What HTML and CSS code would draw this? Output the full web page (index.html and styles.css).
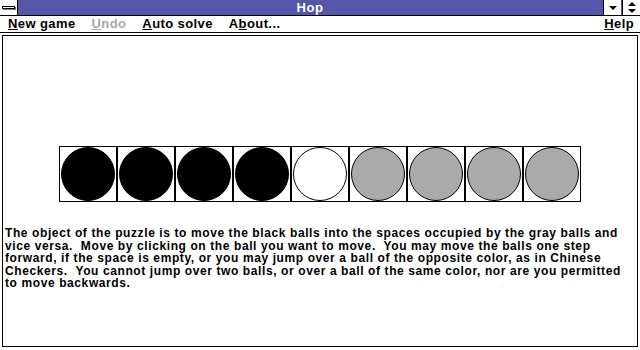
FILE: index.html
```html
<!DOCTYPE html>
<html lang="en">
<head>
    <meta charset="UTF-8">
    <title>Hop</title>
    <link rel="stylesheet" href="styles.css">
</head>
<body>

    <div class="titlebar">
        <div class="sysmenu"><span class="sysbar"></span></div>
        <div class="title">Hop</div>
        <div class="winbtn">
            <svg width="10" height="10" viewBox="0 0 10 10"><polygon points="1,3 9,3 5,7" fill="#000"/></svg>
        </div>
        <div class="winbtn">
            <svg width="10" height="12" viewBox="0 0 10 12"><polygon points="5,0 9,4 1,4" fill="#000"/><polygon points="1,7 9,7 5,11" fill="#000"/></svg>
        </div>
    </div>

    <ul class="menubar">
        <li><u>N</u>ew game</li>
        <li class="disabled"><u>U</u>ndo</li>
        <li><u>A</u>uto solve</li>
        <li>A<u>b</u>out...</li>
        <li class="help"><u>H</u>elp</li>
    </ul>

    <div class="client">
        <div class="board">
            <div class="cell"><div class="ball black"></div></div>
            <div class="cell"><div class="ball black"></div></div>
            <div class="cell"><div class="ball black"></div></div>
            <div class="cell"><div class="ball black"></div></div>
            <div class="cell"><div class="ball empty"></div></div>
            <div class="cell"><div class="ball gray"></div></div>
            <div class="cell"><div class="ball gray"></div></div>
            <div class="cell"><div class="ball gray"></div></div>
            <div class="cell"><div class="ball gray"></div></div>
        </div>
        <p class="rules">The object of the puzzle is to move the black balls into the spaces occupied by the gray balls and vice versa.&nbsp; Move by clicking on the ball you want to move.&nbsp; You may move the balls one step forward, if the space is empty, or you may jump over a ball of the opposite color, as in Chinese Checkers.&nbsp; You cannot jump over two balls, or over a ball of the same color, nor are you permitted to move backwards.</p>
    </div>

</body>
</html>
```

FILE: styles.css
```css
* {
    margin: 0;
    padding: 0;
    box-sizing: border-box;
}

body {
    width: 640px;
    height: 350px;
    overflow: hidden;
    background-color: #fff;
    font-family: "Liberation Sans", Arial, sans-serif;
    font-weight: bold;
    color: #000;
}

.titlebar {
    display: flex;
    height: 16px;
    background-color: #5555aa;
    border-bottom: 1px solid #000;
}

    .titlebar .sysmenu {
        width: 18px;
        background-color: #fff;
        border-right: 1px solid #000;
        display: flex;
        align-items: center;
        justify-content: center;
    }

        .titlebar .sysmenu .sysbar {
            display: block;
            width: 13px;
            height: 3px;
            background-color: #fff;
            border: 1px solid #000;
            box-shadow: 1px 1px 0 #808080;
        }

    .titlebar .title {
        flex: 1;
        text-align: center;
        color: #fff;
        font-size: 13px;
        line-height: 15px;
        letter-spacing: 0.5px;
    }

    .titlebar .winbtn {
        width: 18px;
        margin-left: 1px;
        background-color: #fff;
        border-left: 1px solid #000;
        display: flex;
        align-items: center;
        justify-content: center;
    }

.menubar {
    display: flex;
    list-style-type: none;
    height: 17px;
    border-bottom: 1px solid #000;
    padding: 0 6px 0 8px;
    font-size: 13px;
    line-height: 16px;
    letter-spacing: 0.4px;
}

    .menubar li {
        margin-right: 16px;
    }

        .menubar li.disabled {
            color: #a8a8a8;
        }

        .menubar li.help {
            margin-left: auto;
            margin-right: 0;
        }

.client {
    margin: 2px 2px 3px 2px;
    height: 312px;
    border: 1px solid #000;
    padding: 110px 2px 0 2px;
}

.board {
    display: flex;
    justify-content: center;
}

.cell {
    width: 58px;
    height: 56px;
    border: 1px solid #000;
    display: flex;
    align-items: center;
    justify-content: center;
}

.ball {
    width: 54px;
    height: 54px;
    border-radius: 50%;
    border: 1px solid #000;
}

    .ball.black {
        background-color: #000;
    }

    .ball.empty {
        background-color: #fff;
    }

    .ball.gray {
        background-color: #aaaaaa;
    }

.rules {
    margin-top: 25px;
    font-size: 12px;
    line-height: 12.5px;
    letter-spacing: 0.6px;
}
```
